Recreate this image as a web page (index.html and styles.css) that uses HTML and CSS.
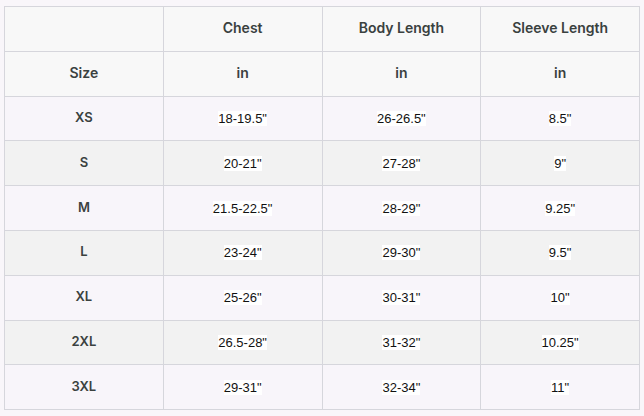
FILE: index.html
```html
<!DOCTYPE html>
<html>
<head>
<meta charset="utf-8">
<link rel="stylesheet" href="styles.css">
</head>
<body>
<table class="size-table">
  <thead>
    <tr class="head-row">
      <th></th>
      <th>Chest</th>
      <th>Body Length</th>
      <th>Sleeve Length</th>
    </tr>
    <tr class="head-row">
      <th>Size</th>
      <th>in</th>
      <th>in</th>
      <th>in</th>
    </tr>
  </thead>
  <tbody>
    <tr class="odd"><th>XS</th><td><span>18-19.5"</span></td><td><span>26-26.5"</span></td><td><span>8.5"</span></td></tr>
    <tr class="even"><th>S</th><td><span>20-21"</span></td><td><span>27-28"</span></td><td><span>9"</span></td></tr>
    <tr class="odd"><th>M</th><td><span>21.5-22.5"</span></td><td><span>28-29"</span></td><td><span>9.25"</span></td></tr>
    <tr class="even"><th>L</th><td><span>23-24"</span></td><td><span>29-30"</span></td><td><span>9.5"</span></td></tr>
    <tr class="odd"><th>XL</th><td><span>25-26"</span></td><td><span>30-31"</span></td><td><span>10"</span></td></tr>
    <tr class="even"><th>2XL</th><td><span>26.5-28"</span></td><td><span>31-32"</span></td><td><span>10.25"</span></td></tr>
    <tr class="odd"><th>3XL</th><td><span>29-31"</span></td><td><span>32-34"</span></td><td><span>11"</span></td></tr>
  </tbody>
</table>
</body>
</html>
```
FILE: styles.css
```css
html, body {
  margin: 0;
  padding: 0;
  background: #f9f6fa;
}
body {
  padding: 6px 0 0 4px;
}
.size-table {
  border-collapse: collapse;
  width: 636px;
  table-layout: fixed;
}
.size-table tr {
  height: 44.8px;
}
.size-table th,
.size-table td {
  border: 1px solid #d6d6dc;
  padding: 0;
  text-align: center;
  vertical-align: middle;
}
.size-table th {
  font-family: "Inter", "Noto Sans", sans-serif;
  font-weight: 600;
  font-size: 14px;
  color: #3a413f;
  padding-bottom: 3px;
}
.size-table tbody th {
  font-size: 13px;
}
.size-table td {
  font-family: "Liberation Sans", Arial, sans-serif;
  font-size: 13px;
  color: #111;
}
.size-table td span {
  background: #fff;
}
.head-row {
  background: #f8f8f8;
}
.odd {
  background: #f8f5fa;
}
.even {
  background: #f2f2f2;
}
```
